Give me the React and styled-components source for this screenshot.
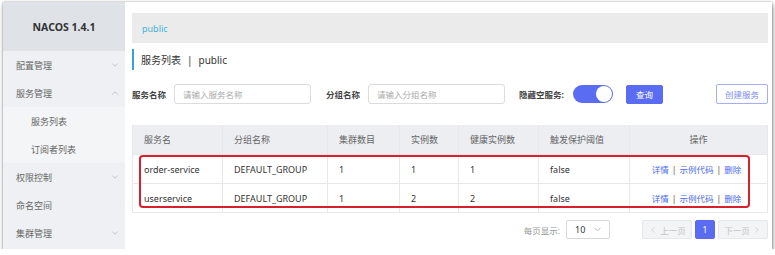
import React from 'react'
import styled, { createGlobalStyle } from 'styled-components'
import { ChevronDown, ChevronUp, ChevronLeft, ChevronRight } from 'lucide-react'

const GlobalStyle = createGlobalStyle`
  html, body {
    margin: 0;
    padding: 0;
    background: #fff;
  }
  body {
    font-family: "Noto Sans", "Noto Sans CJK SC", sans-serif;
    color: #333;
  }
`

const Frame = styled.div`
  display: flex;
  margin: 2px 3px 0 3px;
  height: 247px;
  background: #fff;
  box-shadow: 0 0 2px rgba(0, 0, 0, 0.35), 1px 3px 5px rgba(0, 0, 0, 0.4);
  overflow: hidden;
`

const Sidebar = styled.aside`
  width: 122px;
  flex-shrink: 0;
  background: #eef0f3;
  display: flex;
  flex-direction: column;
`

const Brand = styled.div`
  height: 49px;
  background: #dfe3e8;
  display: flex;
  align-items: center;
  justify-content: center;
  font-size: 10.5px;
  font-weight: 700;
  color: #333;
`

const MenuItem = styled.div`
  height: 28px;
  display: flex;
  align-items: center;
  justify-content: space-between;
  padding: 0 5px 0 ${p => (p.$sub ? 28 : 13)}px;
  font-size: 9px;
  color: #666;
  background: ${p => (p.$sub ? '#f4f5f7' : 'transparent')};
  svg {
    color: #aaa;
  }
`

const Main = styled.main`
  flex: 1;
  padding: 11px 4px 0 7px;
  display: flex;
  flex-direction: column;
`

const Crumb = styled.div`
  height: 30px;
  background: #ebebeb;
  display: flex;
  align-items: center;
  padding-left: 10px;
  font-size: 9px;
  color: #45b3dc;
`

const Title = styled.div`
  margin-top: 6px;
  height: 21px;
  border-left: 2px solid #3aa0d8;
  padding-left: 7px;
  display: flex;
  align-items: center;
  gap: 6px;
  font-size: 10px;
  color: #333;
`

const SearchRow = styled.div`
  margin-top: 14px;
  height: 20px;
  display: flex;
  align-items: center;
`

const Label = styled.span`
  font-size: 8.5px;
  font-weight: 700;
  color: #444;
  margin-right: ${p => p.$gap || 8}px;
`

const Input = styled.div`
  width: 137px;
  height: 20px;
  box-sizing: border-box;
  border: 1px solid #dcdcdc;
  border-radius: 3px;
  display: flex;
  align-items: center;
  padding-left: 8px;
  font-size: 8.5px;
  color: #aaa;
  margin-right: ${p => p.$gap || 15}px;
`

const Toggle = styled.div`
  width: 40px;
  height: 18px;
  border-radius: 9px;
  background: #5a6cf2;
  position: relative;
  margin-right: 13px;
  &::after {
    content: '';
    position: absolute;
    right: 1px;
    top: 1px;
    width: 16px;
    height: 16px;
    border-radius: 50%;
    background: #fff;
  }
`

const Button = styled.div`
  height: ${p => (p.$outline ? 20 : 19)}px;
  box-sizing: border-box;
  padding: 0 ${p => (p.$outline ? 8 : 9)}px;
  border-radius: 2px;
  display: flex;
  align-items: center;
  font-size: 8.5px;
  background: ${p => (p.$outline ? '#fff' : '#5a6cf2')};
  color: ${p => (p.$outline ? '#7f8ef0' : '#fff')};
  border: 1px solid ${p => (p.$outline ? '#a4aff5' : '#5a6cf2')};
  margin-left: ${p => (p.$push ? 'auto' : '0')};
`

const Table = styled.div`
  margin-top: 21px;
  border-left: 1px solid #e8e8e8;
  border-right: 1px solid #e8e8e8;
  position: relative;
`

const Row = styled.div`
  display: grid;
  grid-template-columns: 89px 105px 72px 59px 80px 91px 1fr;
  height: 28px;
  background: ${p => (p.$head ? '#eceef2' : '#fff')};
  border-bottom: 1px solid #e8e8e8;
  font-size: 9px;
  color: ${p => (p.$head ? '#666' : '#333')};
  &:first-child {
    height: 29px;
  }
`

const Cell = styled.div`
  display: flex;
  align-items: center;
  justify-content: ${p => (p.$center ? 'center' : 'flex-start')};
  padding-left: ${p => (p.$center ? 0 : 11)}px;
  border-left: ${p => (p.$first ? 'none' : '1px solid #e8e8e8')};
`

const Actions = styled.div`
  display: flex;
  align-items: center;
  gap: 3px;
  color: #4a6cf0;
  font-size: 8.5px;
  margin-left: -4px;
  span.sep {
    color: #555;
  }
`

const Highlight = styled.div`
  position: absolute;
  left: 6px;
  top: 30px;
  width: 611px;
  height: 53px;
  box-sizing: border-box;
  border: 2px solid #d8202b;
  border-radius: 4px;
  pointer-events: none;
`

const Pager = styled.div`
  margin-top: 7px;
  display: flex;
  align-items: center;
  justify-content: flex-end;
`

const PagerLabel = styled.span`
  font-size: 8.5px;
  color: #999;
  margin-right: 6px;
`

const Select = styled.div`
  width: 44px;
  height: 19px;
  box-sizing: border-box;
  border: 1px solid #d8d8d8;
  border-radius: 2px;
  display: flex;
  align-items: center;
  justify-content: space-between;
  padding: 0 6px 0 8px;
  font-size: 9px;
  color: #333;
  margin-right: 29px;
  svg {
    color: #999;
  }
`

const PageBtn = styled.div`
  height: 19px;
  box-sizing: border-box;
  width: ${p => p.$w}px;
  border-radius: 2px;
  display: flex;
  align-items: center;
  justify-content: center;
  gap: 2px;
  font-size: 8.5px;
  margin-left: 3px;
  background: ${p => (p.$active ? '#5a6cf2' : '#f3f4f6')};
  border: 1px solid ${p => (p.$active ? '#5a6cf2' : '#e6e7ea')};
  color: ${p => (p.$active ? '#fff' : '#c4c4c4')};
`

const rows = [
  { name: 'order-service', group: 'DEFAULT_GROUP', cluster: 1, inst: 1, healthy: 1, thr: 'false' },
  { name: 'userservice', group: 'DEFAULT_GROUP', cluster: 1, inst: 2, healthy: 2, thr: 'false' },
]

const heads = ['服务名', '分组名称', '集群数目', '实例数', '健康实例数', '触发保护阈值']

export default function App() {
  return (
    <>
      <GlobalStyle />
      <Frame>
        <Sidebar>
          <Brand>NACOS 1.4.1</Brand>
          <MenuItem>配置管理<ChevronDown size={10} strokeWidth={1.5} /></MenuItem>
          <MenuItem>服务管理<ChevronUp size={10} strokeWidth={1.5} /></MenuItem>
          <MenuItem $sub>服务列表</MenuItem>
          <MenuItem $sub>订阅者列表</MenuItem>
          <MenuItem>权限控制<ChevronDown size={10} strokeWidth={1.5} /></MenuItem>
          <MenuItem>命名空间</MenuItem>
          <MenuItem>集群管理<ChevronDown size={10} strokeWidth={1.5} /></MenuItem>
        </Sidebar>
        <Main>
          <Crumb>public</Crumb>
          <Title>服务列表<span>|</span>public</Title>
          <SearchRow>
            <Label>服务名称</Label>
            <Input>请输入服务名称</Input>
            <Label>分组名称</Label>
            <Input $gap={14}>请输入分组名称</Input>
            <Label $gap={9}>隐藏空服务:</Label>
            <Toggle />
            <Button>查询</Button>
            <Button $outline $push>创建服务</Button>
          </SearchRow>
          <Table>
            <Row $head>
              {heads.map((h, i) => (
                <Cell key={h} $first={i === 0}>{h}</Cell>
              ))}
              <Cell $center>操作</Cell>
            </Row>
            {rows.map(r => (
              <Row key={r.name}>
                <Cell $first>{r.name}</Cell>
                <Cell>{r.group}</Cell>
                <Cell>{r.cluster}</Cell>
                <Cell>{r.inst}</Cell>
                <Cell>{r.healthy}</Cell>
                <Cell>{r.thr}</Cell>
                <Cell $center>
                  <Actions>
                    <span>详情</span><span className="sep">|</span>
                    <span>示例代码</span><span className="sep">|</span>
                    <span>删除</span>
                  </Actions>
                </Cell>
              </Row>
            ))}
            <Highlight />
          </Table>
          <Pager>
            <PagerLabel>每页显示:</PagerLabel>
            <Select>10<ChevronDown size={11} strokeWidth={1.5} /></Select>
            <PageBtn $w={50}><ChevronLeft size={10} strokeWidth={1.5} />上一页</PageBtn>
            <PageBtn $w={20} $active>1</PageBtn>
            <PageBtn $w={50}>下一页<ChevronRight size={10} strokeWidth={1.5} /></PageBtn>
          </Pager>
        </Main>
      </Frame>
    </>
  )
}
